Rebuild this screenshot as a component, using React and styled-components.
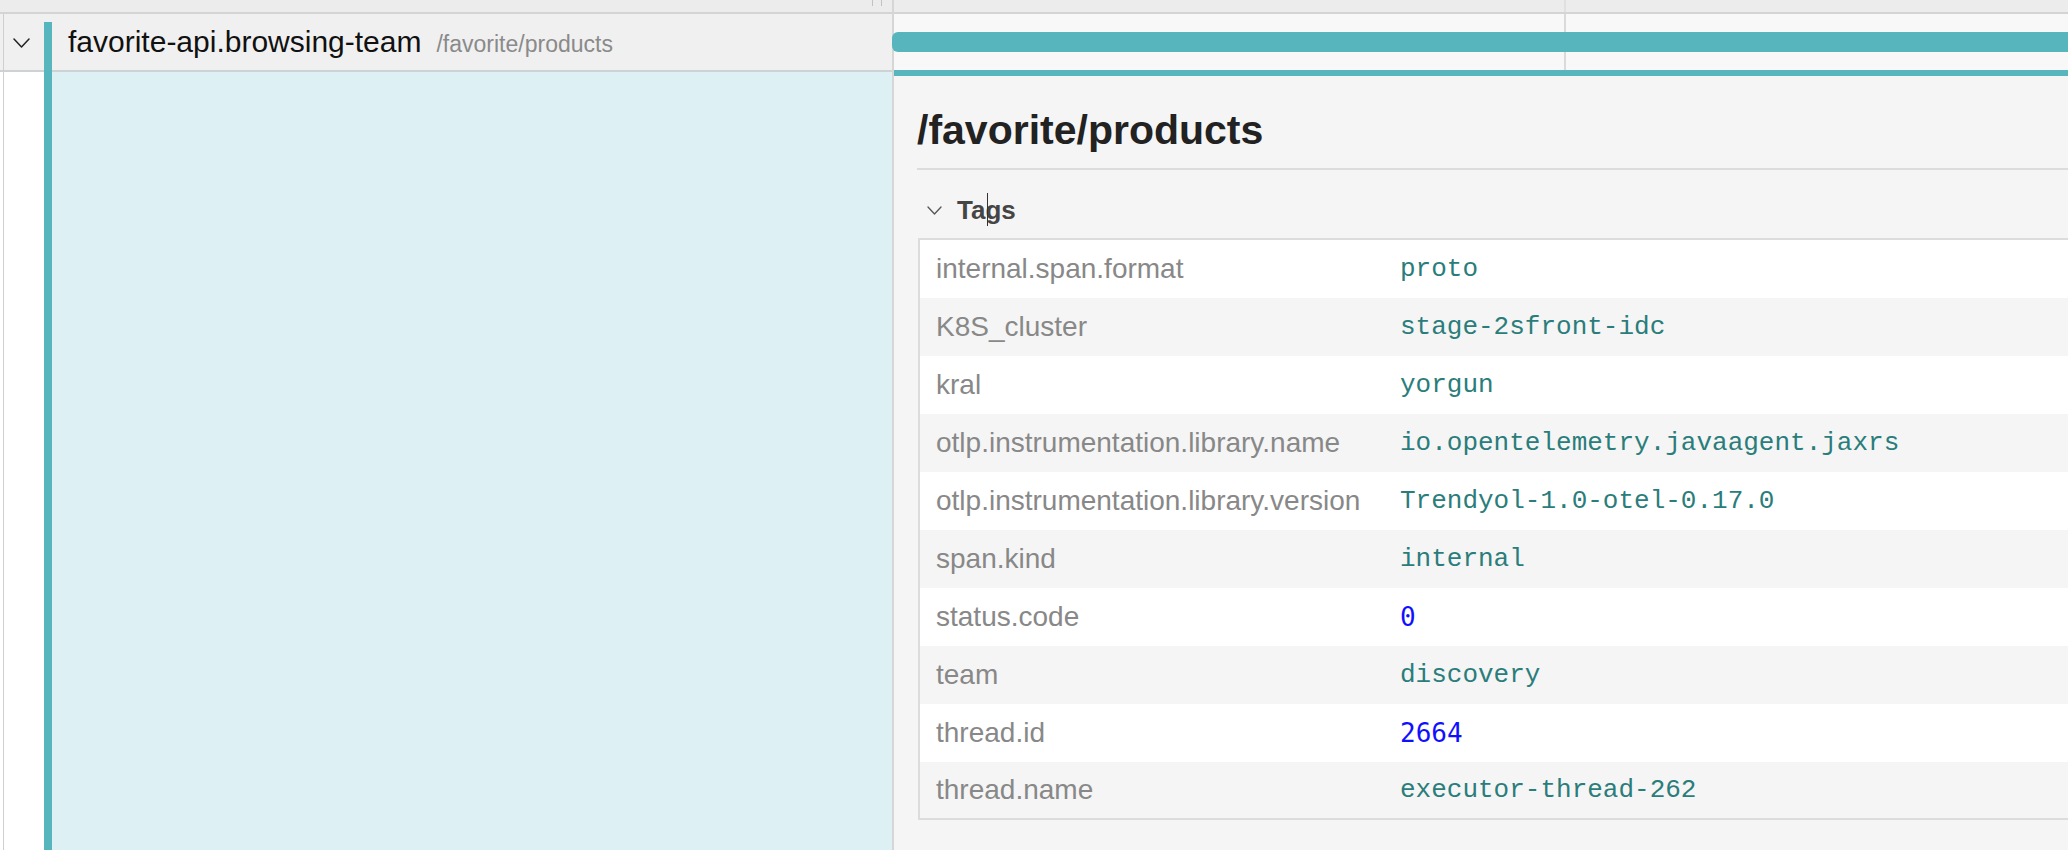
import React from 'react';
import styled, { createGlobalStyle } from 'styled-components';

const TEAL = '#56b5bd';

const Global = createGlobalStyle`
  html, body { margin: 0; padding: 0; background: #fff; }
  body { font-family: "Liberation Sans", Arial, sans-serif; }
  * { box-sizing: border-box; }
`;

const Page = styled.div`
  display: flex;
  width: 2068px;
  height: 850px;
  overflow: hidden;
  background: #fff;
`;

const LeftColumn = styled.div`
  width: 892px;
  flex: none;
  display: flex;
  flex-direction: column;
`;

const Strip = styled.div`
  height: 14px;
  flex: none;
  position: relative;
  display: flex;
  justify-content: flex-end;
  gap: 8px;
  padding-right: 10px;
  background: #ececec;
  border-bottom: 2px solid #d4d4d4;
`;

const HandleLine = styled.span`
  width: 1px;
  height: 6px;
  background: #c2c2c2;
`;

const NameRow = styled.div`
  height: 58px;
  flex: none;
  display: flex;
  background: #f0f0f0;
  box-shadow: inset 0 -2px 0 #cdd3d5;
`;

const Gutter = styled.div`
  width: 41px;
  flex: none;
  margin-left: 3px;
  border-left: 1px solid #cfcfcf;
  display: flex;
  align-items: center;
  padding-left: 9px;
  background: ${(p) => (p.$fill ? p.$fill : 'transparent')};
`;

const NameBlock = styled.div`
  flex: 1;
  margin-top: 8px;
  border-left: 8px solid ${TEAL};
  padding: 3px 0 0 16px;
  white-space: nowrap;
  overflow: hidden;
  line-height: 34px;
`;

const ServiceName = styled.span`
  font-size: 30px;
  color: #111;
`;

const Endpoint = styled.span`
  font-size: 23px;
  color: #8a8a8a;
  margin-left: 15px;
`;

const DetailLeft = styled.div`
  flex: 1;
  display: flex;
`;

const SpanFill = styled.div`
  flex: 1;
  background: #ddf0f3;
  border-left: 8px solid ${TEAL};
`;

const Divider = styled.div`
  width: 2px;
  flex: none;
  background: #d6d6d6;
`;

const RightColumn = styled.div`
  flex: 1;
  min-width: 0;
  display: flex;
  flex-direction: column;
`;

const Tick = styled.span`
  position: absolute;
  top: 0;
  bottom: 0;
  width: 2px;
  background: ${(p) => (p.$soft ? '#e0e0e0' : '#dadada')};
`;

const TimelineRow = styled.div`
  height: 62px;
  flex: none;
  position: relative;
  background: #f8f8f8;
  border-bottom: 6px solid ${TEAL};
`;

const Bar = styled.div`
  position: absolute;
  top: 18px;
  left: -2px;
  right: 0;
  height: 20px;
  background: ${TEAL};
  border-radius: 6px 0 0 6px;
`;

const DetailPanel = styled.div`
  flex: 1;
  background: #f5f5f5;
  padding: 30px 0 0 23px;
  overflow: hidden;
`;

const Title = styled.h2`
  margin: 0;
  font-size: 41px;
  font-weight: 700;
  line-height: 1.2;
  color: #222;
  padding-bottom: 13px;
  border-bottom: 2px solid #dcdcdc;
`;

const TagsHeader = styled.div`
  margin-top: 20px;
  height: 40px;
  display: flex;
  align-items: center;
  gap: 15px;
  padding-left: 10px;
`;

const TagsLabel = styled.span`
  position: relative;
  font-size: 26px;
  font-weight: 700;
  color: #454545;
`;

const Caret = styled.span`
  position: absolute;
  left: 30px;
  top: -2px;
  width: 1px;
  height: 33px;
  background: #333;
`;

const Table = styled.div`
  margin: 8px -40px 0 1px;
  border: 2px solid #dcdcdc;
  background: #fff;
`;

const TagRow = styled.div`
  height: ${(p) => p.$h}px;
  display: flex;
  align-items: center;
  background: ${(p) => (p.$odd ? '#fff' : '#f5f5f5')};
`;

const Key = styled.div`
  width: 480px;
  flex: none;
  padding-left: 16px;
  font-size: 28px;
  color: #888;
  white-space: nowrap;
`;

const Value = styled.div`
  font-size: 26px;
  white-space: nowrap;
  font-family: ${(p) =>
    p.$num ? '"DejaVu Sans Mono", monospace' : '"Liberation Mono", "Courier New", monospace'};
  color: ${(p) => (p.$num ? '#1010ff' : '#2a7d7b')};
`;

const ChevronDown = ({ w, h, color, sw }) => (
  <svg width={w} height={h} viewBox={`0 0 ${w} ${h}`} fill="none">
    <polyline
      points={`1,1 ${w / 2},${h - 1} ${w - 1},1`}
      stroke={color}
      strokeWidth={sw}
      strokeLinecap="round"
      strokeLinejoin="round"
    />
  </svg>
);

const tags = [
  ['internal.span.format', 'proto'],
  ['K8S_cluster', 'stage-2sfront-idc'],
  ['kral', 'yorgun'],
  ['otlp.instrumentation.library.name', 'io.opentelemetry.javaagent.jaxrs'],
  ['otlp.instrumentation.library.version', 'Trendyol-1.0-otel-0.17.0'],
  ['span.kind', 'internal'],
  ['status.code', 0],
  ['team', 'discovery'],
  ['thread.id', 2664],
  ['thread.name', 'executor-thread-262'],
];

export default function App() {
  return (
    <>
      <Global />
      <Page>
        <LeftColumn>
          <Strip>
            <HandleLine />
            <HandleLine />
          </Strip>
          <NameRow>
            <Gutter>
              <ChevronDown w={17} h={10} color="#222" sw={1.5} />
            </Gutter>
            <NameBlock>
              <ServiceName>favorite-api.browsing-team</ServiceName>
              <Endpoint>/favorite/products</Endpoint>
            </NameBlock>
          </NameRow>
          <DetailLeft>
            <Gutter $fill="#fff" />
            <SpanFill />
          </DetailLeft>
        </LeftColumn>
        <Divider />
        <RightColumn>
          <Strip>
            <Tick $soft style={{ left: 670 }} />
          </Strip>
          <TimelineRow>
            <Tick style={{ left: 670 }} />
            <Bar />
          </TimelineRow>
          <DetailPanel>
            <Title>/favorite/products</Title>
            <TagsHeader>
              <ChevronDown w={15} h={9} color="#555" sw={1.3} />
              <TagsLabel>
                Tags
                <Caret />
              </TagsLabel>
            </TagsHeader>
            <Table>
              {tags.map(([k, v], i) => (
                <TagRow key={k} $odd={i % 2 === 0} $h={i === 9 ? 56 : 58}>
                  <Key>{k}</Key>
                  <Value $num={typeof v === 'number'}>{String(v)}</Value>
                </TagRow>
              ))}
            </Table>
          </DetailPanel>
        </RightColumn>
      </Page>
    </>
  );
}
